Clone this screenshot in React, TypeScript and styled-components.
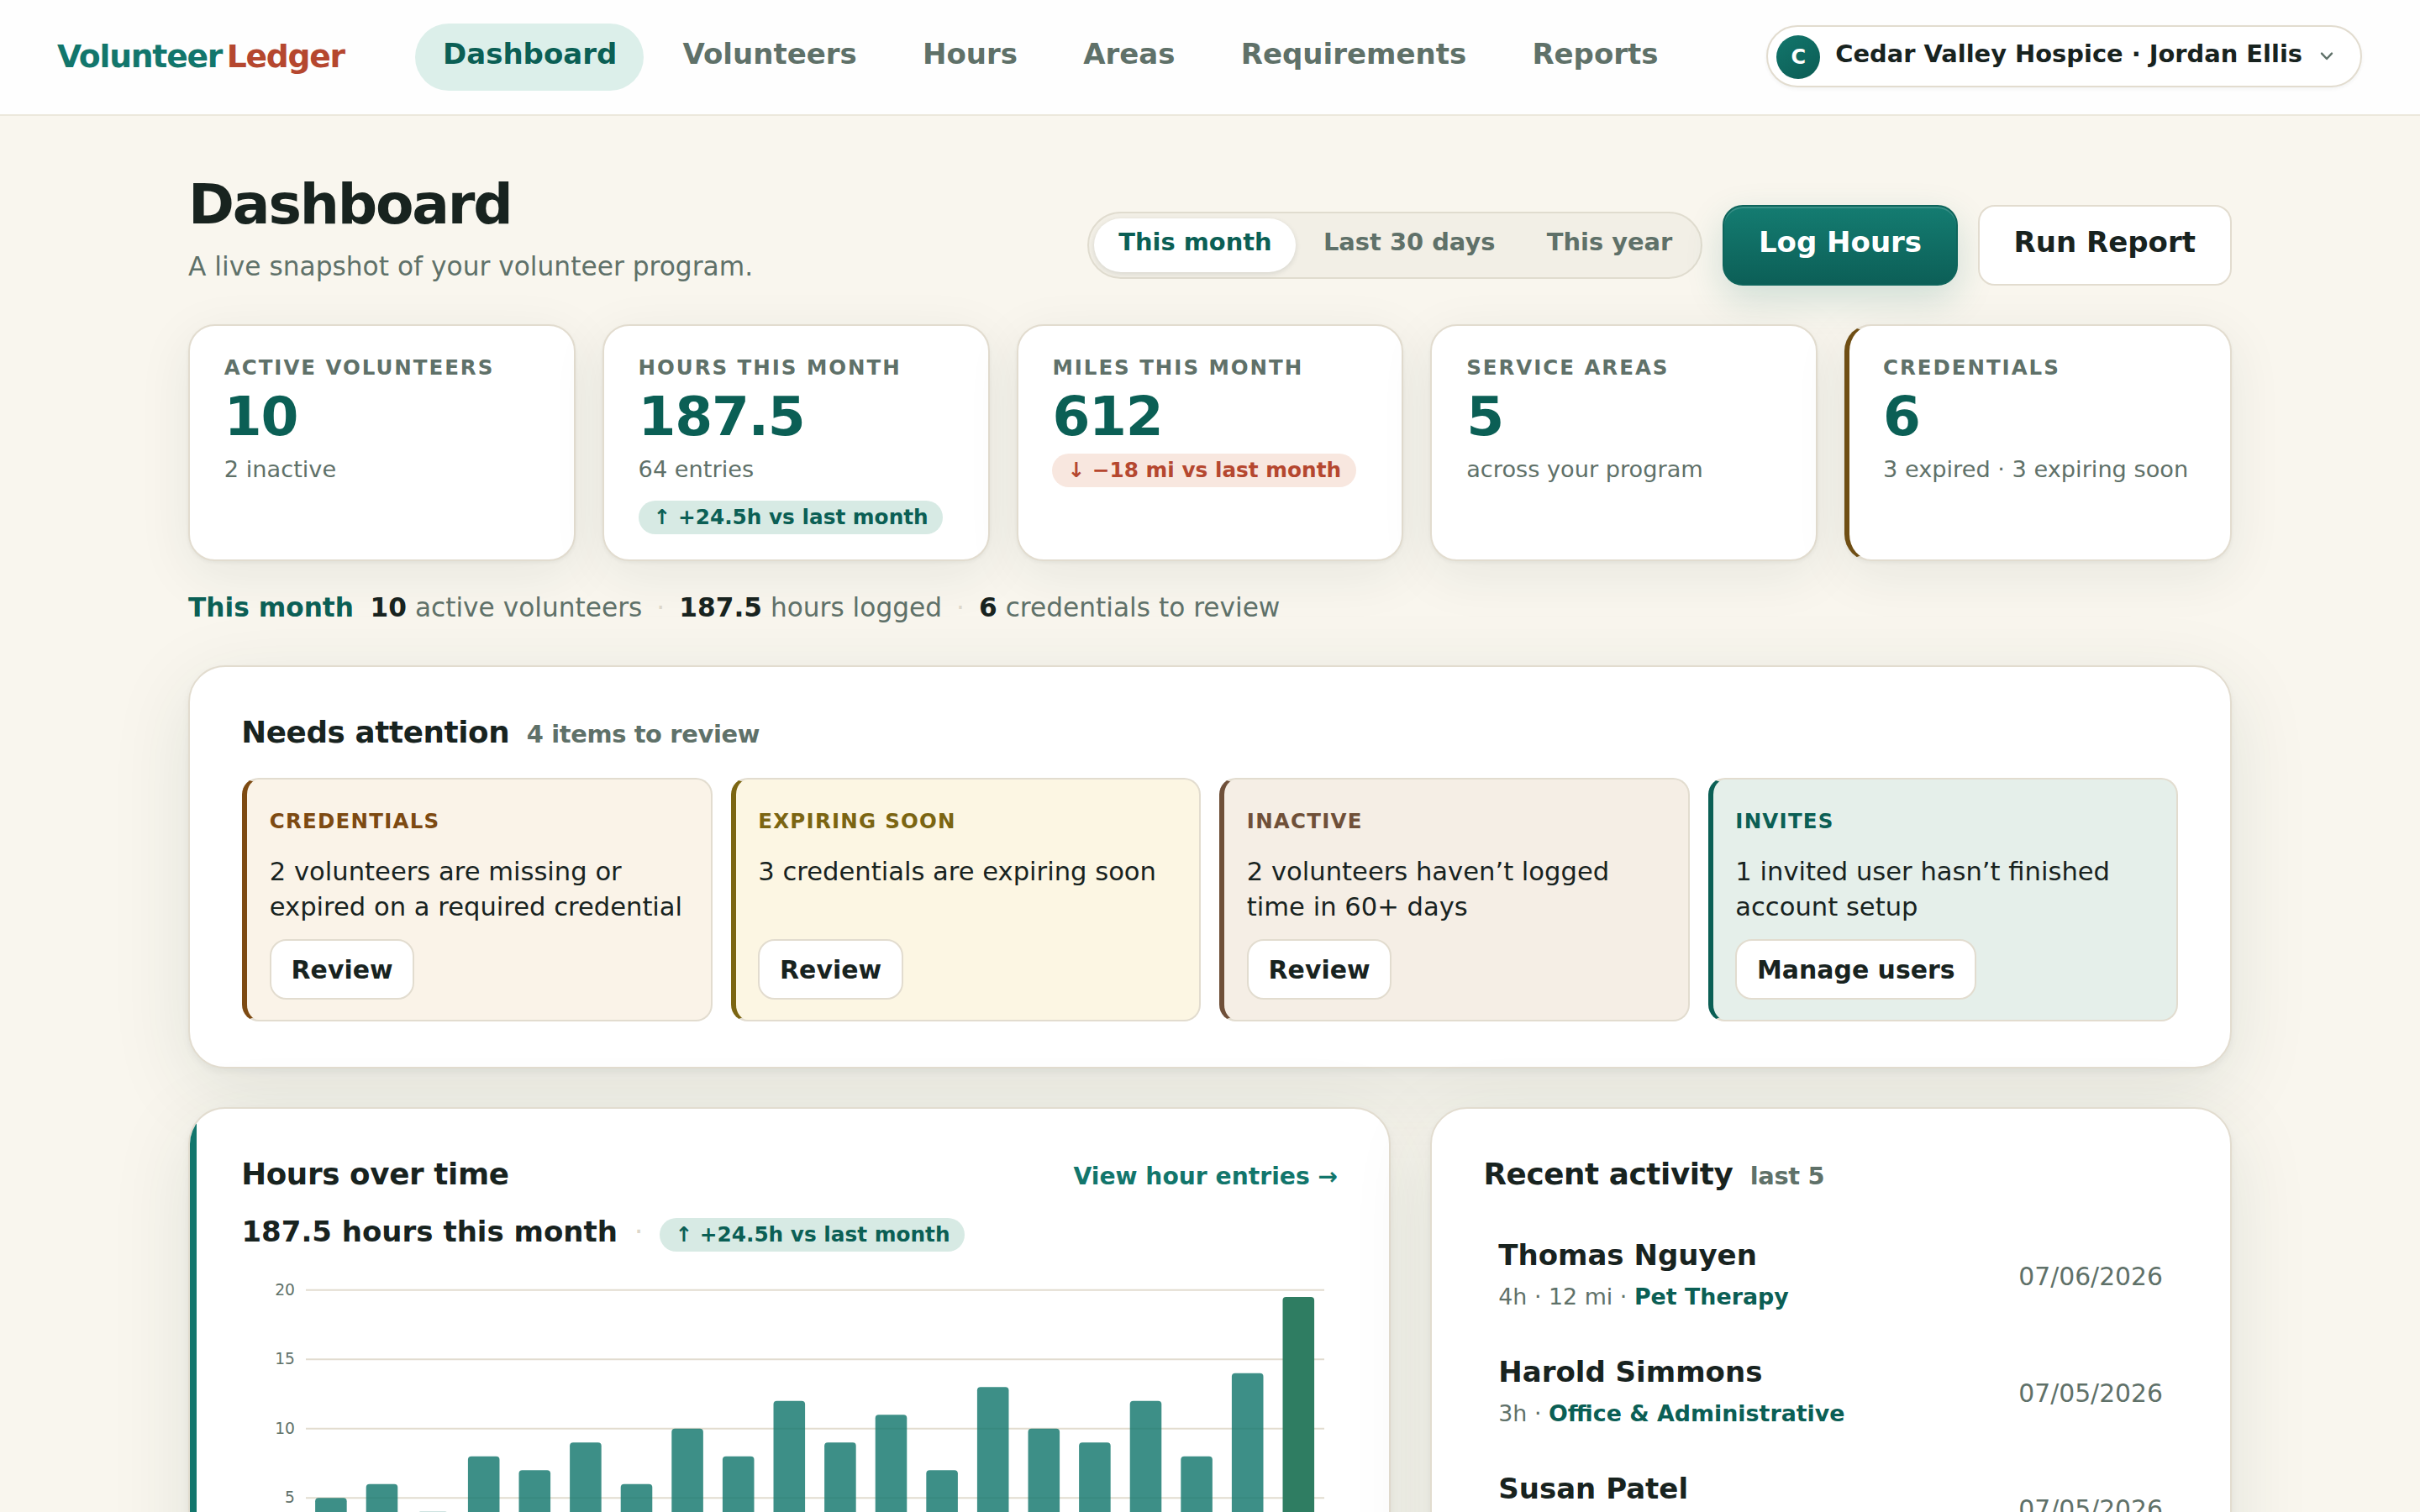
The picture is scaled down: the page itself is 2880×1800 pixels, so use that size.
import React from "react";
import styled, { createGlobalStyle, css } from "styled-components";

const c = {
  ink: "#18231f",
  muted: "#5f7169",
  teal: "#12766c",
  deep: "#0b5f55",
  rust: "#b5472f",
  line: "#e2dccf",
  bg: "#f9f6ee",
};

const Global = createGlobalStyle`
  * { box-sizing: border-box; }
  body {
    margin: 0;
    background: ${c.bg};
    color: ${c.ink};
    font-family: "DejaVu Sans", sans-serif;
  }
  button { font: inherit; color: inherit; cursor: pointer; margin: 0; }
  a { color: inherit; text-decoration: none; }
  h1, h2, p, ul { margin: 0; padding: 0; }
`;

const Page = styled.div`
  height: 1800px;
  overflow: hidden;
`;

const Header = styled.header`
  display: flex;
  align-items: center;
  height: 138px;
  padding: 0 69px 0 68px;
  background: #fefefe;
  border-bottom: 2px solid #ece8dc;
`;

const Logo = styled.a`
  display: flex;
  gap: 5.6px;
  flex: 0 0 426px;
  padding-bottom: 2px;
  font-size: 37.7px;
  line-height: 48px;
  font-weight: 700;
  letter-spacing: -0.033em;
  color: ${c.teal};
`;

const LogoAccent = styled.span`
  color: ${c.rust};
`;

const Nav = styled.nav`
  display: flex;
  gap: 13.6px;
`;

const NavItem = styled.a<{ $active?: boolean }>`
  display: flex;
  align-items: center;
  height: 80px;
  padding: 0 32px 8px 33px;
  border-radius: 40px;
  font-size: 34px;
  font-weight: 700;
  color: ${(p) => (p.$active ? c.deep : c.muted)};
  background: ${(p) => (p.$active ? "#dcefea" : "transparent")};

  & + & {
    padding-left: 32.6px;
  }
`;

const Account = styled.button`
  display: flex;
  align-items: center;
  height: 74px;
  margin: 0 0 2px auto;
  padding: 0 32px 0 10px;
  border: 2px solid ${c.line};
  border-radius: 37px;
  background: #fff;
  box-shadow: 0 2px 4px rgba(24, 35, 31, 0.05);
`;

const Avatar = styled.span`
  display: grid;
  place-items: center;
  width: 52px;
  height: 52px;
  margin-top: 2px;
  border-radius: 50%;
  background: linear-gradient(145deg, #12766c, #0c5c54);
  color: #fff;
  font-size: 24px;
  font-weight: 700;
`;

const AccountName = styled.span`
  margin: 0 21px 6px 18px;
  font-size: 28.9px;
  line-height: 36px;
  font-weight: 700;
`;

const Main = styled.main`
  padding: 66px 224px 0;
`;

const PageHead = styled.div`
  display: flex;
  justify-content: space-between;
  align-items: flex-end;
`;

const Title = styled.h1`
  padding-top: 1px;
  font-size: 66.3px;
  line-height: 76px;
  letter-spacing: -0.033em;
`;

const Subtitle = styled.p`
  margin-top: 13px;
  font-size: 31.28px;
  line-height: 46px;
  color: ${c.muted};
`;

const Actions = styled.div`
  display: flex;
  align-items: center;
  gap: 24px;
`;

const Segmented = styled.div`
  display: flex;
  gap: 4px;
  padding: 6px;
  border: 2px solid #e0dccf;
  border-radius: 40px;
  background: #f2efe6;
`;

const Segment = styled.button<{ $active?: boolean }>`
  height: 64px;
  padding: 0 28.4px 8px 28.9px;
  border: 0;
  border-radius: 32px;
  font-size: 28.9px;
  font-weight: 700;
  color: ${(p) => (p.$active ? c.deep : c.muted)};
  background: ${(p) => (p.$active ? "#fff" : "transparent")};
  box-shadow: ${(p) => (p.$active ? "0 2px 6px rgba(24, 35, 31, 0.12)" : "none")};

  &:last-child {
    padding-right: 28px;
  }
`;

const ActionButton = styled.button<{ $primary?: boolean }>`
  height: 96px;
  padding: 0 41px 8px;
  border: 2px solid ${c.line};
  border-radius: 20px;
  background: #fff;
  font-size: 34px;
  font-weight: 700;
  ${(p) =>
    p.$primary &&
    css`
      padding: 0 40.5px 8px;
      border-color: #0e655c;
      border-radius: 24px;
      color: #fff;
      background: linear-gradient(180deg, #147c71, #0c5f57);
      box-shadow: inset 0 2px 0 rgba(255, 255, 255, 0.16), 0 16px 44px rgba(15, 110, 100, 0.18);
    `}
`;

const Stats = styled.section`
  display: grid;
  grid-template-columns: repeat(5, 1fr);
  gap: 32px;
  margin-top: 46px;
`;

const StatCard = styled.article<{ $warn?: boolean }>`
  display: flex;
  flex-direction: column;
  align-items: flex-start;
  height: 282px;
  padding: 32px 36px 0 40.8px;
  border: 2px solid ${c.line};
  border-radius: 32px;
  background: #fff;
  white-space: nowrap;
  box-shadow: 0 2px 4px rgba(24, 35, 31, 0.05), 0 16px 64px rgba(24, 55, 45, 0.08);
  ${(p) =>
    p.$warn &&
    css`
      border-left: 6px solid #6f4e14;
      padding-left: 39.8px;
    `}
`;

const StatLabel = styled.span`
  font-size: 24.5px;
  line-height: 36px;
  font-weight: 700;
  letter-spacing: 0.08em;
  text-transform: uppercase;
  color: ${c.muted};
`;

const StatValue = styled.strong`
  margin-top: 4px;
  font-size: 64.6px;
  line-height: 72px;
  letter-spacing: -0.02em;
  color: ${c.deep};
`;

const StatNote = styled.span`
  margin-top: 7px;
  font-size: 27.2px;
  line-height: 40px;
  color: ${c.muted};
`;

const Chip = styled.span<{ $down?: boolean; $top: number }>`
  margin-top: ${(p) => p.$top}px;
  padding: 0 17.5px 0 18px;
  border-radius: 20px;
  font-size: 24.75px;
  line-height: 40px;
  font-weight: 700;
  white-space: nowrap;
  color: ${(p) => (p.$down ? c.rust : c.deep)};
  background: ${(p) => (p.$down ? "#f8e7df" : "#d7eae4")};
`;

const Summary = styled.p`
  display: flex;
  margin-top: 31px;
  font-size: 31.23px;
  line-height: 48px;
  color: ${c.muted};
  white-space: pre;
  b { color: ${c.ink}; }
`;

const SummaryLead = styled.strong`
  margin-right: 19.5px;
  color: ${c.deep};
`;

const Dot = styled.span<{ $space: number }>`
  margin: 0 ${(p) => p.$space}px;
  font-weight: 400;
  color: #ddd7ca;
`;

const Panel = styled.section<{ $accent?: boolean }>`
  position: relative;
  overflow: hidden;
  padding: 54px 62px;
  border: 2px solid ${c.line};
  border-radius: 44px;
  background: #fff;
  ${(p) =>
    p.$accent &&
    css`
      &::before {
        content: "";
        position: absolute;
        inset: 0 auto 0 0;
        width: 8px;
        background: ${c.teal};
      }
    `}
  box-shadow: 0 4px 8px rgba(24, 35, 31, 0.05), 0 24px 96px rgba(24, 55, 45, 0.1);
`;

const AttentionPanel = styled(Panel)`
  height: 480px;
  margin-top: 45px;
`;

const PanelHead = styled.div`
  display: flex;
  justify-content: space-between;
  align-items: baseline;
  height: 48px;
`;

const PanelTitle = styled.h2`
  margin-left: -0.8px;
  font-size: 35.7px;
  line-height: 48px;
  letter-spacing: -0.36px;
`;

const TitleNote = styled.span`
  margin-left: 20.4px;
  font-size: 28.9px;
  color: ${c.muted};
`;

const PanelLink = styled.a`
  margin-right: -1.5px;
  font-size: 28.2px;
  font-weight: 700;
  color: ${c.teal};
`;

const Tiles = styled.div`
  display: grid;
  grid-template-columns: repeat(4, 1fr);
  gap: 22px;
  margin-top: 30px;
`;

const Tile = styled.article<{ $accent: string; $bg: string }>`
  display: flex;
  flex-direction: column;
  align-items: flex-start;
  height: 290px;
  padding: 32px 22px 24px 26.8px;
  border: 2px solid ${c.line};
  border-left: 6px solid ${(p) => p.$accent};
  border-radius: 20px;
  background: ${(p) => p.$bg};
`;

const TileLabel = styled.span<{ $color: string }>`
  font-size: 24.5px;
  line-height: 36px;
  font-weight: 700;
  letter-spacing: 0.05em;
  text-transform: uppercase;
  color: ${(p) => p.$color};
`;

const TileText = styled.p`
  margin-top: 21px;
  font-size: 30.6px;
  line-height: 42px;
`;

const TileButton = styled.button`
  height: 72px;
  margin-top: auto;
  padding: 0 23.8px;
  border: 2px solid ${c.line};
  border-radius: 20px;
  background: #fff;
  font-size: 29.92px;
  font-weight: 700;
`;

const Columns = styled.div`
  display: grid;
  grid-template-columns: 3fr 2fr;
  gap: 47.6px;
  margin-top: 46px;
`;

const ColumnPanel = styled(Panel)`
  height: 720px;
`;

const ChartSummary = styled.div`
  display: flex;
  align-items: flex-start;
  margin: 20px 0 0 -0.6px;
  height: 48px;
  font-size: 34px;
  line-height: 48px;
  font-weight: 700;
`;

const Chart = styled.svg`
  display: block;
  margin-top: 10px;
  text {
    font-family: "DejaVu Sans", sans-serif;
    font-size: 18.7px;
    fill: ${c.muted};
  }
`;

const Activity = styled.ul`
  margin-top: 26.5px;
  list-style: none;
`;

const ActivityRow = styled.li`
  display: flex;
  justify-content: space-between;
  align-items: center;
  height: 138.8px;
  padding: 0 18px 0 17px;
`;

const Person = styled.div`
  font-size: 34px;
  line-height: 50px;
  font-weight: 700;
`;

const Detail = styled.div`
  margin-top: 3px;
  font-size: 26.86px;
  line-height: 44px;
  color: ${c.muted};
  b { color: ${c.deep}; }
`;

const ActivityDate = styled.time`
  margin-top: 3px;
  font-size: 29.8px;
  color: ${c.muted};
`;

const navItems = ["Dashboard", "Volunteers", "Hours", "Areas", "Requirements", "Reports"];
const ranges = ["This month", "Last 30 days", "This year"];

type Stat = { label: string; value: string; note?: string; chip?: string; down?: boolean; warn?: boolean };

const stats: Stat[] = [
  { label: "Active volunteers", value: "10", note: "2 inactive" },
  { label: "Hours this month", value: "187.5", note: "64 entries", chip: "↑ +24.5h vs last month" },
  { label: "Miles this month", value: "612", chip: "↓ −18 mi vs last month", down: true },
  { label: "Service areas", value: "5", note: "across your program" },
  { label: "Credentials", value: "6", note: "3 expired · 3 expiring soon", warn: true },
];

const alerts = [
  { label: "Credentials", text: "2 volunteers are missing or expired on a required credential", action: "Review", accent: "#7d4a12", bg: "#faf3e8" },
  { label: "Expiring soon", text: "3 credentials are expiring soon", action: "Review", accent: "#7b6512", bg: "#fcf6e3" },
  { label: "Inactive", text: "2 volunteers haven’t logged time in 60+ days", action: "Review", accent: "#6f5039", bg: "#f5eee5" },
  { label: "Invites", text: "1 invited user hasn’t finished account setup", action: "Manage users", accent: c.deep, bg: "#e5efea" },
];

const hours = [5, 6, 4, 8, 7, 9, 6, 10, 8, 12, 9, 11, 7, 13, 10, 9, 12, 8, 14, 19.5];

const activity = [
  { name: "Thomas Nguyen", detail: "4h · 12 mi · ", area: "Pet Therapy", date: "07/06/2026" },
  { name: "Harold Simmons", detail: "3h · ", area: "Office & Administrative", date: "07/05/2026" },
  { name: "Susan Patel", detail: "5h · 8 mi · ", area: "Patient Care", date: "07/05/2026" },
];

function HoursChart() {
  const left = 76;
  const right = 1288;
  const unit = 16.49;
  const y = (v: number) => 35.8 + (20 - v) * unit;
  const slot = (right - left) / hours.length;
  const bar = slot * 0.62;
  return (
    <Chart width="1304" height="400" viewBox="0 0 1304 400">
      {[20, 15, 10, 5, 0].map((v) => (
        <g key={v}>
          <line x1={left} x2={right} y1={y(v)} y2={y(v)} stroke={c.line} strokeWidth="2" />
          <text x={left - 13} y={y(v) + 6} textAnchor="end">{v}</text>
        </g>
      ))}
      {hours.map((v, i) => (
        <rect
          key={i}
          x={left + slot * i + (slot - bar) / 2 - 0.4}
          y={y(v)}
          width={bar}
          height={v * unit}
          rx="4"
          fill={i === hours.length - 1 ? "#2f7d62" : c.teal}
          opacity={i === hours.length - 1 ? 1 : 0.82}
        />
      ))}
    </Chart>
  );
}

export default function App() {
  return (
    <Page>
      <Global />
      <Header>
        <Logo>
          <span>Volunteer</span>
          <LogoAccent>Ledger</LogoAccent>
        </Logo>
        <Nav>
          {navItems.map((n, i) => (
            <NavItem key={n} $active={i === 0}>{n}</NavItem>
          ))}
        </Nav>
        <Account>
          <Avatar>C</Avatar>
          <AccountName>Cedar Valley Hospice · Jordan Ellis</AccountName>
          <svg width="16" height="12" viewBox="0 0 16 12" fill="none" stroke={c.muted} strokeWidth="2.4" strokeLinecap="round" strokeLinejoin="round">
            <path d="M2 2.6 L8 9 L14 2.6" />
          </svg>
        </Account>
      </Header>
      <Main>
        <PageHead>
          <div>
            <Title>Dashboard</Title>
            <Subtitle>A live snapshot of your volunteer program.</Subtitle>
          </div>
          <Actions>
            <Segmented>
              {ranges.map((r, i) => (
                <Segment key={r} $active={i === 0}>{r}</Segment>
              ))}
            </Segmented>
            <ActionButton $primary>Log Hours</ActionButton>
            <ActionButton>Run Report</ActionButton>
          </Actions>
        </PageHead>
        <Stats>
          {stats.map((s) => (
            <StatCard key={s.label} $warn={s.warn}>
              <StatLabel>{s.label}</StatLabel>
              <StatValue>{s.value}</StatValue>
              {s.note && <StatNote>{s.note}</StatNote>}
              {s.chip && <Chip $down={s.down} $top={s.note ? 17 : 8}>{s.chip}</Chip>}
            </StatCard>
          ))}
        </Stats>
        <Summary>
          <SummaryLead>This month</SummaryLead>
          <b>10</b> active volunteers<Dot $space={17}>·</Dot>
          <b>187.5</b> hours logged<Dot $space={17}>·</Dot>
          <b>6</b> credentials to review
        </Summary>
        <AttentionPanel>
          <PanelHead>
            <PanelTitle>
              Needs attention<TitleNote>4 items to review</TitleNote>
            </PanelTitle>
          </PanelHead>
          <Tiles>
            {alerts.map((a) => (
              <Tile key={a.label} $accent={a.accent} $bg={a.bg}>
                <TileLabel $color={a.accent}>{a.label}</TileLabel>
                <TileText>{a.text}</TileText>
                <TileButton>{a.action}</TileButton>
              </Tile>
            ))}
          </Tiles>
        </AttentionPanel>
        <Columns>
          <ColumnPanel $accent>
            <PanelHead>
              <PanelTitle>Hours over time</PanelTitle>
              <PanelLink>View hour entries →</PanelLink>
            </PanelHead>
            <ChartSummary>
              187.5 hours this month<Dot $space={19.8}>·</Dot>
              <Chip $top={8}>↑ +24.5h vs last month</Chip>
            </ChartSummary>
            <HoursChart />
          </ColumnPanel>
          <ColumnPanel>
            <PanelHead>
              <PanelTitle>
                Recent activity<TitleNote>last 5</TitleNote>
              </PanelTitle>
            </PanelHead>
            <Activity>
              {activity.map((a) => (
                <ActivityRow key={a.name}>
                  <div>
                    <Person>{a.name}</Person>
                    <Detail>
                      {a.detail}
                      <b>{a.area}</b>
                    </Detail>
                  </div>
                  <ActivityDate>{a.date}</ActivityDate>
                </ActivityRow>
              ))}
            </Activity>
          </ColumnPanel>
        </Columns>
      </Main>
    </Page>
  );
}
